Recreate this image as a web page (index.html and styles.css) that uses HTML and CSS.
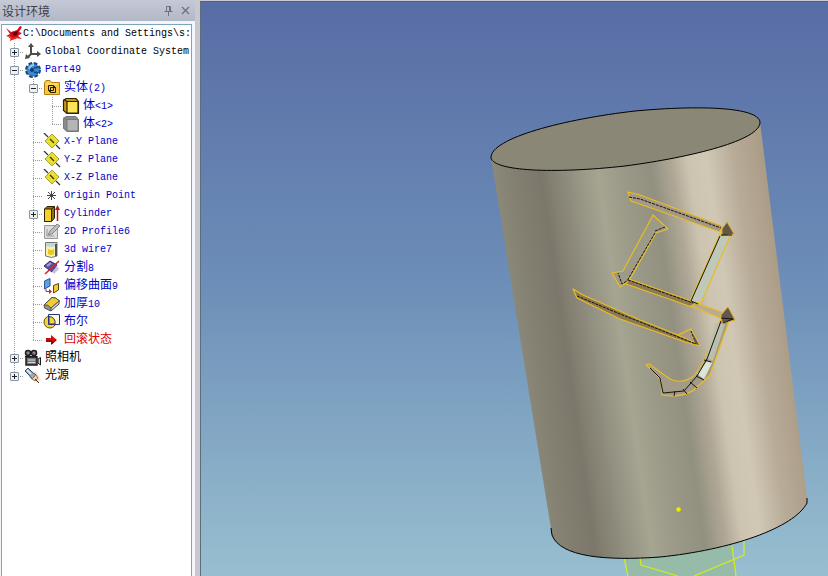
FILE: index.html
```html
<!DOCTYPE html>
<html lang="zh-CN">
  <head>
    <meta charset="UTF-8" />
    <meta name="viewport" content="width=device-width, initial-scale=1.0" />
    <title>设计环境</title>
    <link rel="stylesheet" href="styles.css">
  </head>
  <body>
    <aside class="panel">
      <header class="panel-header">
        <h1>设计环境</h1>
        <button type="button" class="tool" aria-label="Pin">
          <svg width="9" height="10" viewBox="0 0 9 10" fill="none" stroke="#6d7284">
            <path d="M2.500 5.500V.5H6.500V5.500M5.500 1V5M.5 5.500H8.500M4.500 6V10" />
          </svg>
        </button>
        <button type="button" class="tool" aria-label="Close">
          <svg width="9" height="9" viewBox="0 0 9 9" stroke="#6d7284" stroke-width="1.400">
            <path d="M1 1L8 8M8 1L1 8" />
          </svg>
        </button>
      </header>

      <nav class="tree-box" aria-label="设计环境">
        <div class="row root">
          <svg class="icon" viewBox="0 0 18 18">
            <path d="M1 3L6 7L12 5L15 1L17 2L14 7L17 8L13 11L17 14L11 13L5 16L6 12L1 11L5 9Z" fill="#d80f18" />
            <path d="M7 8L13 6L12 10L9 11Z" fill="#5c0508" />
            <path d="M2 11L8 13L14 11L11 14L7 15Z" fill="#ef2b30" />
          </svg>
          <span class="label">C:\Documents and Settings\s:</span>
        </div>

        <ul class="tree">
          <li>
            <div class="row">
              <span class="branch"><button type="button" class="toggle plus" aria-label="Expand"></button></span>
              <svg class="icon" viewBox="0 0 18 18" fill="none" stroke="#4c4c4c" stroke-width="2">
                <path d="M7 3V11H14M7 11L4 14" />
                <path d="M7 0L4 4H10ZM17 11L13 8V14ZM1 16L2 11L6 15Z" fill="#4c4c4c" stroke="none" />
              </svg>
              <span class="label">Global Coordinate System</span>
            </div>
          </li>
          <li>
            <div class="row">
              <span class="branch"><button type="button" class="toggle" aria-label="Collapse"></button></span>
              <svg class="icon" viewBox="0 0 18 18">
                <circle cx="9" cy="9" r="6.500" fill="#2f74b8" stroke="#164a82" stroke-width="3" stroke-dasharray="3.500 1.600" />
                <circle cx="9" cy="9" r="6" fill="#3d86c8" />
                <path d="M5 8Q6 4 10 4" fill="none" stroke="#93c8ef" stroke-width="2" />
                <circle cx="8" cy="9" r="2" fill="#0e3d74" />
                <path d="M10 7L14 6M10 11L14 12" stroke="#124680" stroke-width="1.500" />
              </svg>
              <span class="label blue">Part49</span>
            </div>
            <ul class="tree">
              <li>
                <div class="row">
                  <span class="branch"><button type="button" class="toggle" aria-label="Collapse"></button></span>
                  <svg class="icon" viewBox="0 0 18 18">
                    <path d="M1.500 15.500V3.500L3 1.500H7L8.500 3.500H16.500V15.500Z" fill="#f7c83c" stroke="#b57d10" />
                    <path d="M3 5H15" stroke="#ffe99a" />
                    <path d="M5.500 6.500H10.500V11.500H5.500ZM7.500 8.500H12.500V13.500H7.500ZM5.500 11.500L7.500 13.500M10.500 6.500L12.500 8.500" fill="none" stroke="#2b2000" />
                  </svg>
                  <span class="label blue"><span class="cjk">实体</span>(2)</span>
                </div>
                <ul class="tree">
                  <li>
                    <div class="row">
                      <span class="branch"></span>
                      <svg class="icon" viewBox="0 0 18 18" stroke="#2b2405" stroke-width="1.200">
                        <path d="M1.500 3.500L4 1.500H14L16.500 4.500V16.500H5L1.500 13.500Z" fill="#c99a10" />
                        <path d="M5 4.500H16V16H5Z" fill="#ffe45a" />
                        <path d="M1.500 2.500L5 4.500" />
                      </svg>
                      <span class="label blue"><span class="cjk">体</span>&lt;1&gt;</span>
                    </div>
                  </li>
                  <li>
                    <div class="row">
                      <span class="branch"></span>
                      <svg class="icon" viewBox="0 0 18 18" stroke="#777" stroke-width="1">
                        <path d="M1.500 3.500L4 1.500H14L16.500 4.500V16.500H5L1.500 13.500Z" fill="#8b8b8b" />
                        <path d="M5 4.500H16V16H5Z" fill="#b5b5b8" />
                        <path d="M1.500 2.500L5 4.500" />
                      </svg>
                      <span class="label blue"><span class="cjk">体</span>&lt;2&gt;</span>
                    </div>
                  </li>
                </ul>
              </li>
              <li>
                <div class="row">
                  <span class="branch"></span>
                  <svg class="icon" viewBox="0 0 18 18">
                    <path d="M9 1L16 8L9 15L2 8Z" fill="#e9df2c" stroke="#a69d36" />
                    <path d="M1 0L5 4M7 6L11 10M13 12L17 16" stroke="#333" stroke-width="1.300" />
                  </svg>
                  <span class="label blue">X-Y Plane</span>
                </div>
              </li>
              <li>
                <div class="row">
                  <span class="branch"></span>
                  <svg class="icon" viewBox="0 0 18 18">
                    <path d="M9 1L16 8L9 15L2 8Z" fill="#e9df2c" stroke="#a69d36" />
                    <path d="M1 0L5 4M7 6L11 10M13 12L17 16" stroke="#333" stroke-width="1.300" />
                  </svg>
                  <span class="label blue">Y-Z Plane</span>
                </div>
              </li>
              <li>
                <div class="row">
                  <span class="branch"></span>
                  <svg class="icon" viewBox="0 0 18 18">
                    <path d="M9 1L16 8L9 15L2 8Z" fill="#e9df2c" stroke="#a69d36" />
                    <path d="M1 0L5 4M7 6L11 10M13 12L17 16" stroke="#333" stroke-width="1.300" />
                  </svg>
                  <span class="label blue">X-Z Plane</span>
                </div>
              </li>
              <li>
                <div class="row">
                  <span class="branch"></span>
                  <svg class="icon" viewBox="0 0 18 18" stroke="#444">
                    <path d="M8.500 4V13M4 8.500H13M5 5L12 12M12 5L5 12" />
                  </svg>
                  <span class="label blue">Origin Point</span>
                </div>
              </li>
              <li>
                <div class="row">
                  <span class="branch"><button type="button" class="toggle plus" aria-label="Expand"></button></span>
                  <svg class="icon" viewBox="0 0 18 18">
                    <path d="M1.500 4L4 1.500H11.500V13L8.500 16.500H1.500Z" fill="#96720a" stroke="#2b2405" />
                    <path d="M1.500 4H8.500V16.500H1.500Z" fill="#f5d22a" stroke="#2b2405" />
                    <path d="M8.500 4L11.500 1.500" stroke="#2b2405" />
                    <path d="M14.500 16V4" stroke="#c01818" stroke-width="1.500" />
                    <path d="M14.500 0L17 5H12Z" fill="#c01818" />
                  </svg>
                  <span class="label blue">Cylinder</span>
                </div>
              </li>
              <li>
                <div class="row">
                  <span class="branch"></span>
                  <svg class="icon" viewBox="0 0 18 18">
                    <path d="M1.500 2.500H14.500V15.500H1.500Z" fill="#dcdcdc" stroke="#9a9a9a" />
                    <path d="M4 13V6M4 13H11" stroke="#9a9a9a" />
                    <path d="M5 12L7 8L14 1L17 3L9 11Z" fill="#bcbcbc" stroke="#858585" />
                  </svg>
                  <span class="label blue">2D Profile6</span>
                </div>
              </li>
              <li>
                <div class="row">
                  <span class="branch"></span>
                  <svg class="icon" viewBox="0 0 18 18">
                    <path d="M2.500 1.500H14V15Q9 18 2.500 15Z" fill="#f6efb2" stroke="#6d7a80" />
                    <path d="M3 2H13V5Q8 7 3 5Z" fill="#cbd4d4" />
                    <path d="M5 8Q9 10 11 8V13Q8 15 5 13Z" fill="#e9c91c" />
                    <path d="M13 3V15" stroke="#4f564f" stroke-width="2" />
                  </svg>
                  <span class="label blue">3d wire7</span>
                </div>
              </li>
              <li>
                <div class="row">
                  <span class="branch"></span>
                  <svg class="icon" viewBox="0 0 18 18">
                    <path d="M1 7L7 2L14 6L9 13Z" fill="#5b50a5" stroke="#352d72" />
                    <path d="M9 13L14 7L16 10L11 15Z" fill="#c5c0df" />
                    <path d="M4 7L8 4" stroke="#a9a2dd" stroke-width="2" />
                    <path d="M2 15L16 2" stroke="#d32222" stroke-width="1.500" />
                  </svg>
                  <span class="label blue"><span class="cjk">分割</span>8</span>
                </div>
              </li>
              <li>
                <div class="row">
                  <span class="branch"></span>
                  <svg class="icon" viewBox="0 0 18 18">
                    <path d="M1.500 4L7 1.500V9L1.500 12Z" fill="#5fa0e5" stroke="#245ca2" />
                    <path d="M10.500 8.500L15.500 6.500V13L10.500 16Z" fill="#f3cf2b" stroke="#57470c" />
                    <path d="M3 12V14.500H7" stroke="#c52424" fill="none" />
                    <path d="M6 12L9 14.500L6 17Z" fill="#c52424" />
                  </svg>
                  <span class="label blue"><span class="cjk">偏移曲面</span>9</span>
                </div>
              </li>
              <li>
                <div class="row">
                  <span class="branch"></span>
                  <svg class="icon" viewBox="0 0 18 18" stroke="#53533f">
                    <path d="M1 10L9 2.500Q13 2 16.500 6L9 13L8 16L1.500 13Z" fill="#8b98a0" />
                    <path d="M1 10L9 2.500Q13 2 16.500 6L8 13Q5 9 1 10Z" fill="#f2ce31" />
                    <path d="M8 13V16L16 9V6Z" fill="#cad4dc" />
                  </svg>
                  <span class="label blue"><span class="cjk">加厚</span>10</span>
                </div>
              </li>
              <li>
                <div class="row">
                  <span class="branch"></span>
                  <svg class="icon" viewBox="0 0 18 18">
                    <circle cx="7" cy="9" r="6" fill="#f5d52e" stroke="#615315" />
                    <path d="M5.500 1.500H16.500V11.500H5.500Z" fill="#fffbe0" stroke="#26327c" />
                    <path d="M6 3.500A6 6 0 0 1 12 11H6Z" fill="#f5d52e" stroke="#26327c" />
                  </svg>
                  <span class="label blue"><span class="cjk">布尔</span></span>
                </div>
              </li>
              <li>
                <div class="row">
                  <span class="branch"></span>
                  <svg class="icon" viewBox="0 0 18 18">
                    <path d="M3 7H8V4L14 9L8 14V11H3Z" fill="#d30d0d" />
                    <path d="M3 10H9V13L13 9" fill="none" stroke="#710505" />
                  </svg>
                  <span class="label red"><span class="cjk">回滚状态</span></span>
                </div>
              </li>
            </ul>
          </li>
          <li>
            <div class="row">
              <span class="branch"><button type="button" class="toggle plus" aria-label="Expand"></button></span>
              <svg class="icon" viewBox="0 0 18 18">
                <path d="M2 8H13V16H2Z" fill="#777" stroke="#1c1c1c" stroke-width="1.500" />
                <circle cx="4" cy="4" r="2.500" fill="#888" stroke="#1c1c1c" stroke-width="1.500" />
                <circle cx="10" cy="4" r="2.500" fill="#888" stroke="#1c1c1c" stroke-width="1.500" />
                <path d="M14 10L16.500 8.500V16L14 14ZM1 7.500H13" fill="#ccc" stroke="#1c1c1c" />
                <path d="M4 11H11M4 13.500H11" stroke="#ddd" />
              </svg>
              <span class="label"><span class="cjk">照相机</span></span>
            </div>
          </li>
          <li>
            <div class="row">
              <span class="branch"><button type="button" class="toggle plus" aria-label="Expand"></button></span>
              <svg class="icon" viewBox="0 0 18 18">
                <path d="M7 8L12 4L17 13L13 16Z" fill="#fbe3ca" />
                <path d="M1 4L4 1L8 5L12 8L8 12L5 8Z" fill="#8eacc9" stroke="#34495f" />
                <path d="M8 12L12 8L14 11L11 14Z" fill="#f9cfa4" stroke="#a36e4a" />
                <path d="M3 3L7 7" stroke="#e8f3fc" stroke-width="1.500" />
                <path d="M11 12L15 16" stroke="#333" />
              </svg>
              <span class="label"><span class="cjk">光源</span></span>
            </div>
          </li>
        </ul>
      </nav>
    </aside>

    <main class="viewport">
      <svg class="scene" viewBox="201 2 627 574" preserveAspectRatio="xMinYMin slice" role="img" aria-label="Part49">
        <defs>
          <linearGradient id="metal" gradientUnits="userSpaceOnUse" x1="506" y1="250" x2="771" y2="212">
            <stop offset="0" stop-color="#8a8879" />
            <stop offset="0.080" stop-color="#827e70" />
            <stop offset="0.170" stop-color="#7c776a" />
            <stop offset="0.290" stop-color="#949282" />
            <stop offset="0.380" stop-color="#a5a592" />
            <stop offset="0.480" stop-color="#9a9886" />
            <stop offset="0.580" stop-color="#929080" />
            <stop offset="0.660" stop-color="#b0a896" />
            <stop offset="0.720" stop-color="#cdc4b0" />
            <stop offset="0.790" stop-color="#d0c8b5" />
            <stop offset="0.890" stop-color="#b8ac98" />
            <stop offset="1" stop-color="#ab9c87" />
          </linearGradient>
        </defs>

        <!-- base below the cylinder -->
        <path d="M624 556L628 576H736L732 545Z" fill="#96bba9" />
        <path d="M624 557L628 576M732 546L736 576M640 558L641 565L678 576M694 576L744 555V541" fill="none" stroke="#d4ea20" stroke-width="1.300" />

        <!-- cylinder -->
        <path d="M491 158L552 535C560 557 606 561 660 557C730 550 794 528 807 503V498L760 122Z" fill="url(#metal)" />
        <path d="M551 528L552 535C560 557 606 561 660 557C730 550 794 528 807 503V498" fill="none" stroke="#000" />
        <path d="M491 158C490 138 565 119 635 111C700 105 758 107 760 122C761 140 693 157 625 166C553 174 494 171 491 158Z" fill="#8a8777" stroke="#000" />

        <!-- upper strokes -->
        <g stroke="#e9bd24" stroke-width="1.200" stroke-linejoin="round">
          <path d="M628 192L640 195L722 226L720 232L631 201Z" fill="#a39985" />
          <path d="M653 215L668 229L656 233L629 281L620 287L612 273L623 271Z" fill="#9d9b87" />
          <path d="M629 279L697 303L692 307L626 284Z" fill="#8b7a56" />
          <path d="M720 234L731 234L701 303L690 301Z" fill="#bfc8b9" />
          <path d="M696 303L722 312L720 318L691 306Z" fill="#b9ad91" />
        </g>
        <path d="M629 197L640 199L721 228M655 233L627 281L622 284L618 273M655 231L665 227M628 280L693 303" fill="none" stroke="#17140d" stroke-dasharray="3 1" />
        <path d="M720 236L691 301L698 304" fill="none" stroke="#17140d" />
        <path d="M727 222L734 234L722 236L722 229Z" fill="#62564e" stroke="#d6ab25" />
        <path d="M721 235H732" stroke="#17140d" />

        <!-- lower strokes -->
        <g stroke="#e9bd24" stroke-width="1.200" stroke-linejoin="round">
          <path d="M573 289L583 295L640 320L678 335L691 329L700 346L685 342L620 319L577 298Z" fill="#8d7a55" />
          <path d="M678 335L691 329L695 343Z" fill="#a69c88" />
          <path d="M646 365L649 364L670 379Q683 385 695 375L704 361L720 320L729 321L710 375L698 386Q687 399 662 395L661 381L654 372Z" fill="#a29b88" />
        </g>
        <path d="M707 361L712 363L704 379L697 374Z" fill="#dce5d8" />
        <path d="M715 323L725 324L713 361L706 358Z" fill="#bdbfae" />
        <path d="M577 296L620 314L696 344L691 331" fill="none" stroke="#17140d" stroke-dasharray="3 1" />
        <path d="M650 368L660 378L663 393L684 391L697 376L707 359L721 321M675 391L674 396M683 389L687 394M690 382L697 388M696 376L704 380M704 360L711 362" fill="none" stroke="#17140d" />
        <path d="M692 332L699 345L695 343Z" fill="#62564e" />
        <path d="M728 307L735 320L722 323L721 315Z" fill="#62564e" stroke="#d6ab25" />
        <path d="M721 318L733 319L723 323" fill="none" stroke="#17140d" />

        <circle cx="678.500" cy="509.500" r="2" fill="#eef000" stroke="#dcdc00" />
      </svg>
    </main>
  </body>
</html>
```
FILE: styles.css
```css
* {
  margin: 0;
  padding: 0;
  box-sizing: border-box;
}

body {
  display: flex;
  height: 100vh;
  overflow: hidden;
  background-color: #c9c8d0;
  font-family: "Liberation Mono", "Noto Sans CJK SC", monospace;
  font-size: 10px;
  color: #000;
}

/* Left panel */
.panel {
  flex: 0 0 195px;
  min-width: 0;
  display: flex;
  flex-direction: column;
  gap: 3px;
  background-color: #f4f5fa;
}

.panel-header {
  height: 21px;
  flex-shrink: 0;
  display: flex;
  align-items: center;
  gap: 8px;
  padding: 0 5px 0 2px;
  background: linear-gradient(#c5c9d5, #b3b8c7);
}

.panel-header h1 {
  flex: 1;
  font: 12px/18px "Noto Sans CJK SC", sans-serif;
  color: #3b3f4c;
}

.tool {
  display: flex;
  border: 0;
  background: none;
}

.tree-box {
  flex: 1;
  width: 191px;
  margin-left: 1px;
  padding: 0 0 0 3px;
  border: 1px solid #7fa5b9;
  border-bottom: 0;
  background-color: #fff;
}

/* Tree */
.tree {
  list-style: none;
}

.tree .tree {
  margin-left: 19px;
}

.tree li {
  background: repeating-linear-gradient(#999 0 1px, transparent 1px 2px) 9px 0 / 1px 100% no-repeat;
}

.tree li:last-child {
  background-size: 1px 9px;
}

.row {
  height: 18px;
  display: flex;
  align-items: center;
  white-space: nowrap;
}

.branch {
  width: 19px;
  height: 18px;
  flex-shrink: 0;
  display: flex;
  align-items: center;
  padding-left: 5px;
  background: repeating-linear-gradient(90deg, #999 0 1px, transparent 1px 2px) 9px 9px / 10px 1px no-repeat;
}

.toggle {
  width: 9px;
  height: 9px;
  border: 1px solid #8497a8;
  border-radius: 1px;
  background: linear-gradient(#222, #222) center / 5px 1px no-repeat, #f0f0ec;
}

.toggle.plus {
  background: linear-gradient(#222, #222) center / 5px 1px no-repeat,
    linear-gradient(#222, #222) center / 1px 5px no-repeat, #f0f0ec;
}

.icon {
  width: 18px;
  height: 18px;
  flex-shrink: 0;
  margin-right: 3px;
}

.root .icon {
  margin-right: 0;
}

.label {
  line-height: 18px;
}

.cjk {
  font-size: 12px;
}

.blue {
  color: #0000c8;
}

.red {
  color: #e00000;
}

/* 3D view */
.viewport {
  flex: 1;
  min-width: 0;
  margin: 1px 0 0 5px;
  border-top: 1px solid #55617c;
  border-left: 1px solid #5b6e7c;
  background: linear-gradient(#586ca5, #6d8fb8 50%, #98bfd0);
}

.scene {
  display: block;
  width: 100%;
  height: 100%;
}
```
